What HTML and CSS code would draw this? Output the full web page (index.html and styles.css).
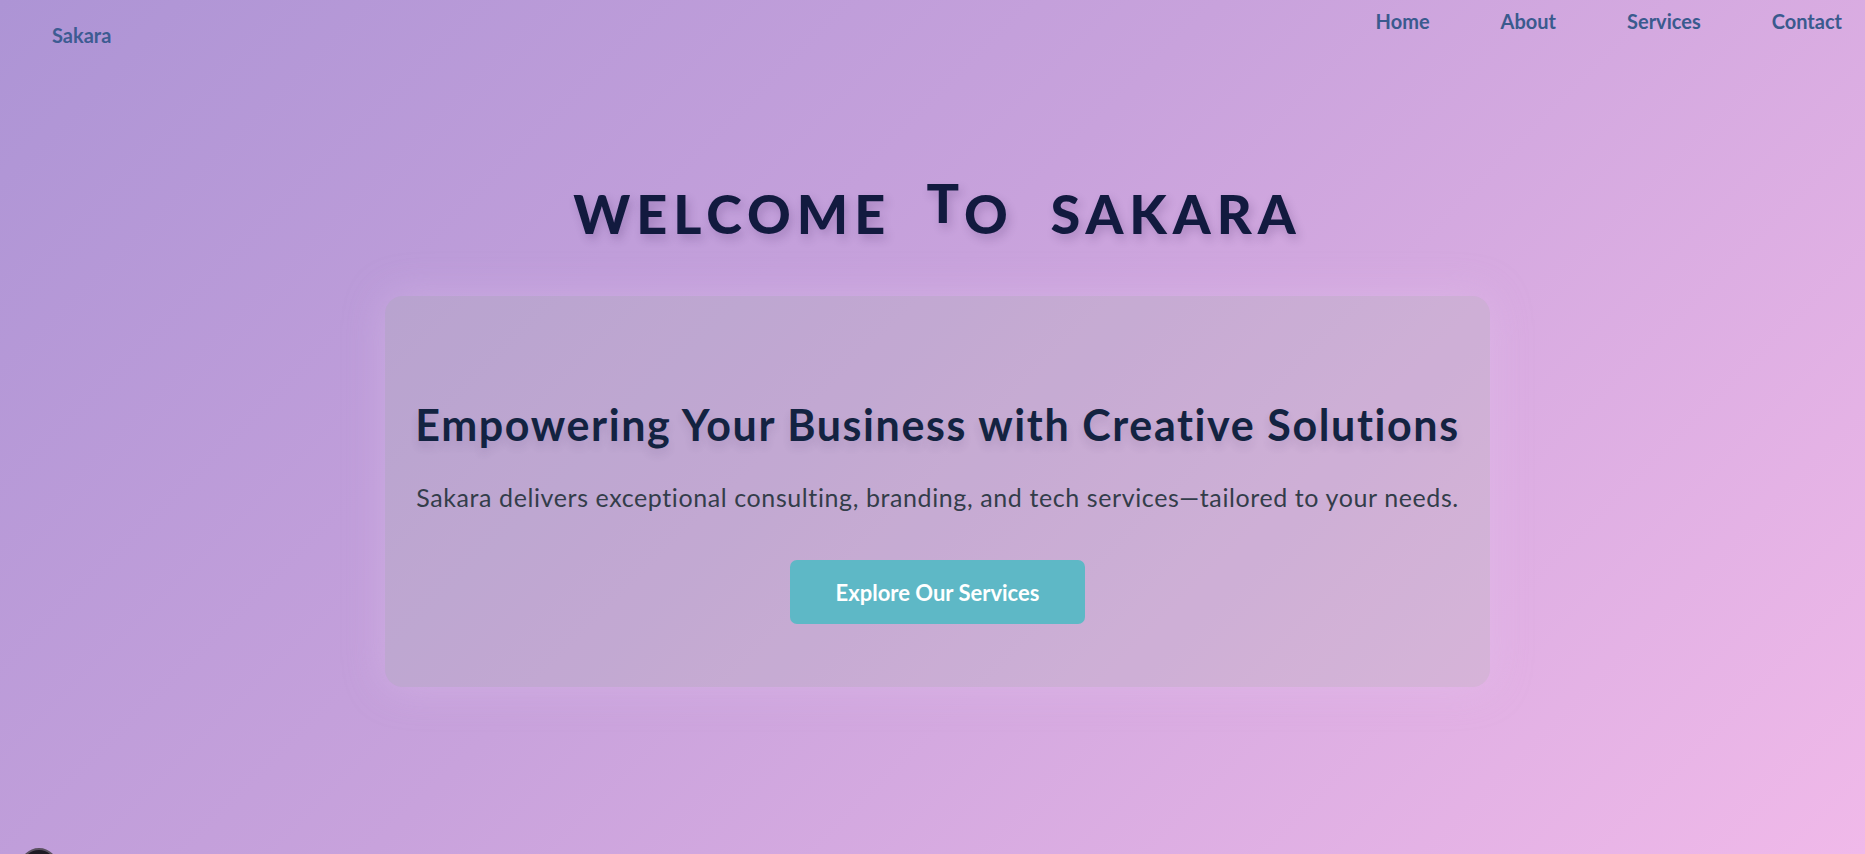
FILE: index.html
```html
<!DOCTYPE html>
<html lang="en">
<head>
<meta charset="utf-8">
<title>Sakara</title>
<link rel="stylesheet" href="styles.css">
</head>
<body>
<header class="site-header">
  <a class="logo" href="#">Sakara</a>
  <nav>
    <ul class="nav-list">
      <li><a href="#">Home</a></li>
      <li><a href="#">About</a></li>
      <li><a href="#">Services</a></li>
      <li><a href="#">Contact</a></li>
    </ul>
  </nav>
</header>
<main class="hero">
  <h1 class="hero-title">WELCOME <span class="raised">T</span>O SAKARA</h1>
  <section class="card">
    <h2 class="card-title">Empowering Your Business with Creative Solutions</h2>
    <p class="card-text">Sakara delivers exceptional consulting, branding, and tech services—tailored to your needs.</p>
    <a class="btn" href="#">Explore Our Services</a>
  </section>
</main>
<div class="fab"></div>
</body>
</html>
```

FILE: styles.css
```css
* { box-sizing: border-box; }

html, body {
  margin: 0;
  height: 100%;
}

body {
  font-family: Lato, "Open Sans", sans-serif;
  background: linear-gradient(135deg, #ad94d5 0%, #c8a2dc 45%, #f0b9e9 100%);
  overflow: hidden;
  position: relative;
}

a { text-decoration: none; }

.site-header {
  display: flex;
  justify-content: space-between;
  align-items: flex-start;
}

.logo {
  display: block;
  padding: 23px 0 0 52px;
  font-size: 20px;
  line-height: 24px;
  font-weight: 700;
  color: #3d5b92;
}

.nav-list {
  list-style: none;
  margin: 0;
  padding: 9px 23px 0 0;
  display: flex;
  gap: 71px;
}

.nav-list a {
  font-size: 20px;
  line-height: 24px;
  font-weight: 700;
  color: #3a5a8e;
}

.hero {
  display: flex;
  flex-direction: column;
  align-items: center;
  padding-left: 10px;
}

.hero-title {
  margin: 134px 0 50px;
  font-size: 54px;
  line-height: 65px;
  font-weight: 900;
  letter-spacing: 6px;
  word-spacing: 18px;
  color: #121a3f;
  text-shadow: 3px 5px 10px rgba(60, 30, 90, 0.22);
}

.raised {
  position: relative;
  top: -11px;
}

.card {
  width: 1105px;
  padding: 103px 20px 63px;
  border-radius: 18px;
  background: rgba(168, 196, 168, 0.2);
  box-shadow: 0 0 40px rgba(230, 200, 240, 0.35);
  text-align: center;
}

.card-title {
  margin: 0;
  font-size: 43px;
  line-height: 52px;
  font-weight: 700;
  letter-spacing: 1.6px;
  color: #132341;
  text-shadow: 0 6px 8px rgba(60, 40, 90, 0.12);
}

.card-text {
  margin: 31px 0 0;
  font-size: 25px;
  line-height: 30px;
  letter-spacing: 0.6px;
  color: #333d4a;
}

.btn {
  display: inline-flex;
  align-items: center;
  justify-content: center;
  width: 295px;
  height: 64px;
  margin-top: 48px;
  border-radius: 7px;
  background: #5eb8c6;
  color: #ffffff;
  font-size: 22px;
  font-weight: 700;
}

.fab {
  position: absolute;
  left: 20px;
  top: 848px;
  width: 38px;
  height: 38px;
  border-radius: 50%;
  background: #1e1a24;
  border: 2px solid #5a5060;
}
```
